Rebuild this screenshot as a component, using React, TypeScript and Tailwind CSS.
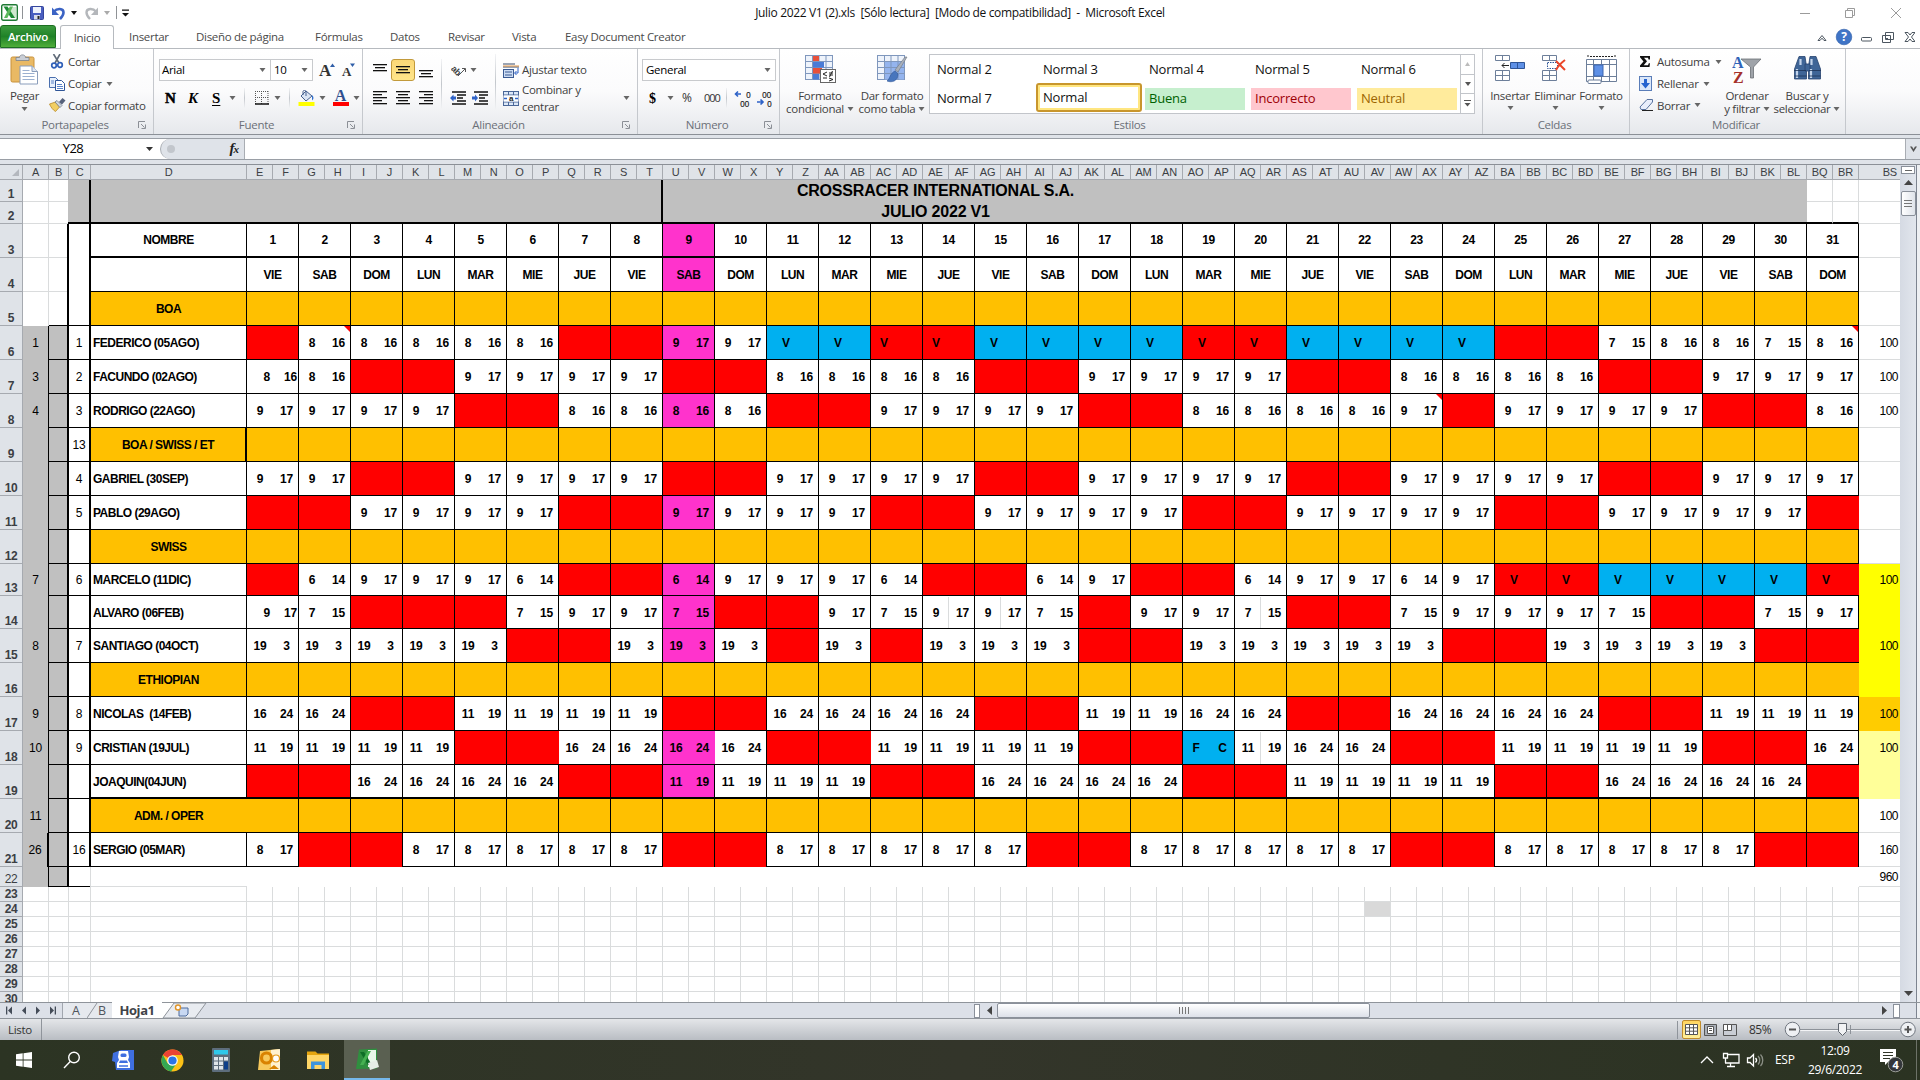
import React from "react";

/* ---------- small shared pieces ---------- */

const Caret = ({ className = "" }: { className?: string }) => (
  <svg width="7" height="4" viewBox="0 0 7 4" className={"shrink-0 " + className}>
    <path d="M0.5 0h6L3.5 4z" fill="#666" />
  </svg>
);

const Sep = ({ className = "" }: { className?: string }) => (
  <div className={"w-px shrink-0 bg-gradient-to-b from-[#f2f3f5] via-[#c3c7cc] to-[#f2f3f5] " + className} />
);

const GroupLabel = ({ label, launcher = true }: { label: string; launcher?: boolean }) => (
  <div className="flex h-[18px] shrink-0 items-center text-[#6b7078]">
    <div className="flex-1 pl-3 text-center">{label}</div>
    <div className="w-[15px]">
      {launcher && (
        <svg width="8" height="8" viewBox="0 0 8 8">
          <path d="M0.5 7V0.5H7" stroke="#8b8f96" fill="none" />
          <path d="M3 3l3.5 3.5M7.500 3.500v4h-4" stroke="#8b8f96" fill="none" />
        </svg>
      )}
    </div>
  </div>
);

const Group = ({ w, label, launcher = true, children }: { w: string; label: string; launcher?: boolean; children: React.ReactNode }) => (
  <div className={"flex h-full shrink-0 flex-col border-r border-[#c5c8cd] " + w}>
    <div className="flex h-[67px] shrink-0">{children}</div>
    <GroupLabel label={label} launcher={launcher} />
  </div>
);

const Lines = ({ rows, y = 0 }: { rows: [number, number][]; y?: number }) => (
  <svg width="14" height="14" viewBox="0 0 14 14">
    {rows.map(([x, w], i) => (
      <rect key={i} x={x} y={y + i * 3} width={w} height="1.300" fill="#111" />
    ))}
  </svg>
);

/* ---------- title and tabs ---------- */

const ExcelLogo = () => (
  <svg width="17" height="17" viewBox="0 0 17 17">
    <rect x="0.7" y="0.7" width="15.6" height="15.600" rx="1.500" fill="#fff" stroke="#1f7a34" strokeWidth="1.400" />
    <path d="M10 3h5v11h-5z" fill="#cfe8cf" />
    <path d="M2.500 2.500h4L14 14h-4z" fill="#1d8a35" />
    <path d="M12 2.500h-3.200L3 14h3.300z" fill="#5cb85c" />
  </svg>
);

const TitleBar = () => (
  <div className="flex h-[25px] shrink-0 items-center bg-white pl-[1px]">
    <div className="flex w-[300px] items-center">
      <ExcelLogo />
      <div className="ml-[4px] h-[13px] w-px bg-[#8f9296]" />
      <svg width="14" height="14" viewBox="0 0 14 14" className="ml-[7px]">
        <rect x="0.5" y="0.5" width="13" height="13" rx="1" fill="#4a5fc0" stroke="#34459c" />
        <rect x="3" y="1" width="8" height="6" fill="#eef2fc" />
        <rect x="4" y="9" width="6" height="4.500" fill="#d8dcea" />
        <rect x="7.500" y="10" width="2" height="3" fill="#222" />
      </svg>
      <svg width="14" height="14" viewBox="0 0 14 14" className="ml-[8px]">
        <path d="M2 5.500C5 2 11.500 2 11.500 6.500c0 3-2 5-3.500 6.500" stroke="#3b63c4" strokeWidth="2.600" fill="none" />
        <path d="M0 1.500v7.500h7z" fill="#3b63c4" />
      </svg>
      <svg width="6" height="4" viewBox="0 0 6 4" className="ml-[5px]"><path d="M0 0h6L3 4z" fill="#111" /></svg>
      <svg width="14" height="14" viewBox="0 0 14 14" className="ml-[7px]">
        <path d="M12 5.500C9 2 2.500 2 2.500 6.500c0 3 2 5 3.500 6.500" stroke="#b4b7bb" strokeWidth="2.400" fill="none" />
        <path d="M14 1.500v7.500H7z" fill="#b4b7bb" />
      </svg>
      <svg width="6" height="4" viewBox="0 0 6 4" className="ml-[6px]"><path d="M0 0h6L3 4z" fill="#aaa" /></svg>
      <div className="ml-[6px] h-[13px] w-px bg-[#8f9296]" />
      <svg width="7" height="8" viewBox="0 0 7 8" className="ml-[5px]">
        <path d="M0 0.500h7v1.300H0zM0 4h7L3.500 7.500z" fill="#111" />
      </svg>
    </div>
    <div className="flex-1 whitespace-pre pr-[0px] text-center text-[12px] tracking-[-0.34px] text-[#111]">
      Julio 2022 V1 (2).xls  [Sólo lectura]  [Modo de compatibilidad]  -  Microsoft Excel
    </div>
    <div className="flex w-[301px] items-center justify-end pr-[19px]">
      <svg width="104" height="12" viewBox="0 0 104 12" fill="none" stroke="#9b9b9b">
        <path d="M3 6.500h10M48.500 3.500h7v7h-7zM50.500 3.500v-2h7v7h-2M94 1l10 10M104 1L94 11" />
      </svg>
    </div>
  </div>
);

const TABS: [string, string][] = [
  ["Insertar", "w-[67px]"],
  ["Diseño de página", "w-[119px]"],
  ["Fórmulas", "w-[75px]"],
  ["Datos", "w-[58px]"],
  ["Revisar", "w-[64px]"],
  ["Vista", "w-[53px]"],
  ["Easy Document Creator", "w-[160px]"],
];

const RibbonTabs = () => (
  <div className="flex h-[24px] shrink-0 items-stretch border-b border-[#b6babf] bg-white text-[#4a4a4a]">
    <div className="flex w-[56px] items-center justify-center rounded-t-[3px] border border-[#1d6f22] bg-gradient-to-b from-[#3b9a3d] via-[#1f8227] to-[#4fae3a] font-semibold text-white">
      Archivo
    </div>
    <div className="-mb-px ml-[4px] mr-[15px] flex w-[54px] items-center justify-center rounded-t-[3px] border border-b-0 border-[#b6babf] bg-white">
      Inicio
    </div>
    {TABS.map(([t, w]) => (
      <div key={t} className={"flex shrink-0 items-center whitespace-nowrap " + w}>{t}</div>
    ))}
    <div className="flex flex-1 items-center justify-end pr-[5px]">
      <svg width="100" height="18" viewBox="0 0 100 18" fill="none" stroke="#4c5660">
        <path d="M3 12.500l4-5 4 5-2 0-2-2.300-2 2.300z" strokeWidth="1" />
        <circle cx="29" cy="9" r="7.800" fill="#3f74c6" stroke="#2f5ea8" strokeWidth="0.600" />
        <text x="29" y="13.300" fontSize="12" fontWeight="700" textAnchor="middle" fill="#fff" stroke="none" fontFamily="Open Sans, sans-serif">?</text>
        <rect x="46.500" y="9.500" width="10" height="3.500" rx="1" />
        <path d="M70.500 4.500h8v7h-8zM67.500 7.500h8v7h-8zM70 10.500h3" />
        <path d="M90 4.500h3l2 2.500 2-2.500h3l-3.500 4.500 3.500 4.500h-3l-2-2.500-2 2.500h-3l3.500-4.500z" />
      </svg>
    </div>
  </div>
);

/* ---------- ribbon ---------- */

const Clipboard = () => (
  <Group w="w-[154px]" label="Portapapeles">
    <div className="flex w-[49px] flex-col items-center pt-[5px]">
      <svg width="29" height="31" viewBox="0 0 29 31">
        <rect x="1" y="3" width="23" height="25" rx="1.500" fill="#e9b964" stroke="#c8913b" />
        <path d="M6 3.500h3.500C9.500 0 15.500 0 15.500 3.500H19v3H6z" fill="#c9ced6" stroke="#7b828c" strokeWidth="0.800" />
        <path d="M10 12h12l5.500 5.500V30H10z" fill="#fff" stroke="#8a9dbb" />
        <path d="M12.500 16.500h7M12.500 19.500h12M12.500 22.500h12M12.500 25.500h12" stroke="#9bb0d0" />
        <path d="M22 12v5.500h5.500" fill="#dfe7f3" stroke="#8a9dbb" />
      </svg>
      <div className="mt-[3px] h-[16px] leading-[16px]">Pegar</div>
      <Caret className="mt-[3px]" />
    </div>
    <div className="flex flex-col pt-[2px] [&>div]:h-[22px]">
      <div className="flex items-center">
        <svg width="16" height="15" viewBox="0 0 16 15" fill="none">
          <path d="M4.500 0L10 9M11 0L6 9" stroke="#5f6a78" strokeWidth="1.600" />
          <circle cx="5" cy="11.500" r="2.300" stroke="#2f5fb8" strokeWidth="1.700" />
          <circle cx="11" cy="11" r="2.300" stroke="#2f5fb8" strokeWidth="1.700" />
        </svg>
        <span className="ml-[3px]">Cortar</span>
      </div>
      <div className="flex items-center">
        <svg width="16" height="14" viewBox="0 0 16 14">
          <path d="M0.500 0.500h6l3 3v7h-9z" fill="#e8f0fb" stroke="#4a6fae" />
          <path d="M6.500 3.500h6l3 3v7h-9z" fill="#fff" stroke="#2f5597" />
          <path d="M8 7.500h5M8 9.500h6M8 11.500h6M2 4h3M2 6h3" stroke="#5b84c9" />
        </svg>
        <span className="ml-[3px]">Copiar</span>
        <Caret className="ml-[5px]" />
      </div>
      <div className="flex items-center">
        <svg width="17" height="14" viewBox="0 0 17 14">
          <path d="M0.500 6l6-2 4 5-4 4.500C4 12 2 9.500 0.500 6z" fill="#f2cf63" stroke="#b98a2a" strokeWidth="0.800" />
          <path d="M6 4l2-1.500 5 5-2 2z" fill="#cfd6e0" stroke="#66707e" strokeWidth="0.700" />
          <path d="M10 4l3.500-4 3 2.500-3.500 4z" fill="#56617a" />
        </svg>
        <span className="ml-[2px]">Copiar formato</span>
      </div>
    </div>
  </Group>
);

const FontGroup = () => (
  <Group w="w-[209px]" label="Fuente">
    <div className="flex flex-col">
      <div className="ml-[5px] mt-[10px] flex h-[22px] text-black">
        <div className="flex w-[112px] items-center justify-between border border-[#c8cacd] bg-white pl-[2px] pr-[4px]">Arial<Caret /></div>
        <div className="-ml-px flex w-[43px] items-center justify-between border border-[#c8cacd] bg-white pl-[3px] pr-[4px]">10<Caret /></div>
        <div className="flex pl-[6px] font-['Liberation_Serif'] font-bold tracking-normal text-[#333]">
          <span className="w-[11px] text-[17px] leading-[24px]">A</span>
          <svg width="5" height="4" viewBox="0 0 5 4" className="mt-[4px]"><path d="M0 4h5L2.500 0.500z" fill="#2f5ea8" /></svg>
          <span className="ml-[7px] w-[8px] text-[13px] leading-[26px]">A</span>
          <svg width="5" height="4" viewBox="0 0 5 4" className="mt-[4px]"><path d="M0 0.500h5L2.500 4z" fill="#2f5ea8" /></svg>
        </div>
      </div>
      <div className="mt-[4px] flex h-[26px] items-center font-['Liberation_Serif'] text-[15px] font-bold tracking-normal text-black">
        <span className="ml-[11px] w-[23px] [-webkit-text-stroke:0.5px_black]">N</span>
        <span className="w-[24px] italic">K</span>
        <span className="w-[17px] underline underline-offset-2">S</span>
        <Caret />
        <Sep className="ml-[8px] h-[20px]" />
        <svg width="14" height="14" viewBox="0 0 14 14" className="ml-[10px]">
          <path d="M0.500 0v13M6.500 0v13M13 0v13M0 0.500h13M0 6.500h13" stroke="#555" strokeDasharray="1 1" fill="none" />
          <path d="M0 13h14" stroke="#111" strokeWidth="1.500" />
        </svg>
        <Caret className="ml-[5px]" />
        <Sep className="ml-[8px] h-[20px]" />
        <svg width="17" height="16" viewBox="0 0 17 16" className="ml-[8px]">
          <path d="M3 6l5-5 6 5-6 5z" fill="#dbe5f4" stroke="#47618f" />
          <path d="M5 5V1.500c0-1.500 3-1.500 3 0V6" stroke="#47618f" fill="none" />
          <path d="M14 5c2 2 2 4 0 5.500z" fill="#2f6fd0" />
          <rect x="0.500" y="12" width="16" height="4" fill="#ff0" />
        </svg>
        <Caret className="ml-[4px]" />
        <div className="ml-[6px] flex h-[16px] w-[17px] flex-col items-center">
          <span className="h-[12px] text-[16px] leading-[12px] text-[#2f4f8f]">A</span>
          <div className="h-[4px] w-[16px] bg-[#f00]" />
        </div>
        <Caret className="ml-[4px]" />
      </div>
    </div>
  </Group>
);

const Align = () => (
  <Group w="w-[275px]" label="Alineación">
    <div className="flex w-[78px] flex-col">
      <div className="mt-[10px] flex h-[22px] items-center">
        <div className="ml-[10px] w-[18px] pb-[2px]"><Lines rows={[[0, 14], [2, 10], [0, 14]]} y={2} /></div>
        <div className="flex h-[22px] w-[24px] items-center justify-center rounded-[3px] border border-[#c29a3b] bg-gradient-to-b from-[#fbd877] to-[#ffe58a]"><Lines rows={[[0, 14], [2, 10], [0, 14]]} y={3} /></div>
        <div className="ml-[4px] pt-[3px]"><Lines rows={[[0, 14], [2, 10], [0, 14]]} y={5} /></div>
      </div>
      <div className="mt-[4px] flex h-[26px] items-center gap-[9px] pl-[10px]">
        <Lines rows={[[0, 14], [0, 9], [0, 14], [0, 9], [0, 14]]} />
        <Lines rows={[[0, 14], [2, 10], [0, 14], [2, 10], [0, 14]]} />
        <Lines rows={[[0, 14], [5, 9], [0, 14], [5, 9], [0, 14]]} />
      </div>
    </div>
    <Sep className="mt-[10px] h-[50px]" />
    <div className="flex w-[53px] flex-col">
      <div className="mt-[10px] flex h-[22px] items-center pl-[9px]">
        <svg width="17" height="14" viewBox="0 0 17 14">
          <text x="0" y="9" fontSize="9" fontWeight="700" fontFamily="Liberation Sans, sans-serif" fill="#444" transform="rotate(45 3 7)">ab</text>
          <path d="M7 13l7-7M11 5.500h3.500V9" stroke="#555" fill="none" />
        </svg>
        <Caret className="ml-[2px]" />
      </div>
      <div className="mt-[4px] flex h-[26px] items-center gap-[6px] pl-[8px]">
        {[0, 1].map((k) => (
          <svg key={k} width="16" height="14" viewBox="0 0 16 14">
            <path d="M2 1h14M7 4h9M7 7h6M7 10h9M2 13h14" stroke="#111" strokeWidth="1.400" />
            <path d={k ? "M0 5.500h3V3.500L6 7l-3 3.500V8.500H0z" : "M6 5.500H3.500V3.500L0 7l3.500 3.500V8.500H6z"} fill="#2f63c8" />
          </svg>
        ))}
      </div>
    </div>
    <Sep className="mt-[5px] h-[56px]" />
    <div className="flex flex-col">
      <div className="mt-[10px] flex h-[22px] items-center pl-[7px]">
        <svg width="16" height="15" viewBox="0 0 16 15">
          <path d="M0 1h12M0 4h16" stroke="#3a4a66" strokeWidth="1.200" />
          <path d="M0 3h16" stroke="#e79a4a" />
          <rect x="0.500" y="6.500" width="10" height="8" fill="#cddcf3" stroke="#3a5a92" />
          <path d="M2 9h7M2 12h7" stroke="#3a5a92" />
          <path d="M15 5v5h-3M13.500 8l-2 2 2 2" stroke="#2f63c8" fill="none" />
        </svg>
        <span className="ml-[3px]">Ajustar texto</span>
      </div>
      <div className="mt-[4px] flex h-[26px] items-center pl-[7px]">
        <svg width="16" height="15" viewBox="0 0 16 15">
          <rect x="0.500" y="0.500" width="15" height="14" fill="#dce8f8" stroke="#4a6798" />
          <path d="M5.500 0v4M10.500 0v4M5.500 11v4M10.500 11v4M0 4h16M0 11h16" stroke="#4a6798" />
          <rect x="0.500" y="4.500" width="15" height="6" fill="#fff" />
          <text x="8" y="10" fontSize="8" fontWeight="700" textAnchor="middle" fontFamily="Liberation Sans, sans-serif" fill="#222">a</text>
          <path d="M1 7.500h3M12 7.500h3" stroke="#2f63c8" strokeWidth="1.500" />
        </svg>
        <span className="ml-[3px] w-[97px]">Combinar y centrar</span>
        <Caret className="ml-[4px]" />
      </div>
    </div>
  </Group>
);

const NumberGroup = () => (
  <Group w="w-[142px]" label="Número">
    <div className="flex flex-col">
      <div className="ml-[4px] mt-[10px] flex h-[22px] w-[134px] items-center justify-between border border-[#c8cacd] bg-white pl-[3px] pr-[4px] text-black">General<Caret /></div>
      <div className="mt-[4px] flex h-[26px] items-center text-[12px] text-[#333]">
        <span className="ml-[11px] w-[18px] font-['Liberation_Serif'] text-[14px] font-bold text-black">$</span>
        <Caret />
        <span className="ml-[8px] w-[22px]">%</span>
        <span className="w-[22px] text-[11px] tracking-[-1px]">000</span>
        <Sep className="h-[20px]" />
        <svg width="38" height="17" viewBox="0 0 38 17" className="ml-[7px]" fill="none">
          <g fontFamily="Open Sans, sans-serif" fontSize="8.500" fontWeight="600" fill="#333">
            <text x="12" y="8">0</text><text x="6" y="16.500">00</text>
            <text x="28" y="8">00</text><text x="33" y="16.500">0</text>
          </g>
          <path d="M1 4h6M4 1.500L1.500 4 4 6.500M23 12h6M26.500 9.500L29 12l-2.500 2.500" stroke="#2f63c8" strokeWidth="1.600" />
        </svg>
      </div>
    </div>
  </Group>
);

const BigButton = ({ w, icon, a, b, caretOnly = false }: { w: string; icon: React.ReactNode; a: string; b?: string; caretOnly?: boolean }) => (
  <div className={"flex shrink-0 flex-col items-center pt-[6px] " + w}>
    <div className="flex h-[31px] items-start">{icon}</div>
    <div className="mt-[2px] h-[14px] whitespace-nowrap leading-[16px]">{a}</div>
    {caretOnly ? (
      <Caret className="mt-[4px]" />
    ) : (
      <div className="flex h-[13px] items-center whitespace-nowrap leading-[13px]">{b}<Caret className="ml-[3px]" /></div>
    )}
  </div>
);

const STYLES: { t: string; c: string }[] = [
  { t: "Normal 2", c: "" },
  { t: "Normal 3", c: "" },
  { t: "Normal 4", c: "" },
  { t: "Normal 5", c: "" },
  { t: "Normal 6", c: "" },
  { t: "Normal 7", c: "" },
  { t: "Normal", c: "sel" },
  { t: "Buena", c: "bg-[#c6efce] text-[#006100]" },
  { t: "Incorrecto", c: "bg-[#ffc7ce] text-[#9c0006]" },
  { t: "Neutral", c: "bg-[#ffeb9c] text-[#9c6500]" },
];

const Styles = () => (
  <Group w="w-[703px]" label="Estilos" launcher={false}>
    <BigButton
      w="w-[80px]"
      a="Formato"
      b="condicional"
      icon={
        <svg width="31" height="28" viewBox="0 0 31 28">
          <rect x="0.500" y="0.500" width="27" height="24" fill="#eef3fb" stroke="#7f97bd" />
          <path d="M7.500 1v24M14 1v24M21 1v24M1 6.500h26M1 12.500h26M1 18.500h26" stroke="#7f97bd" />
          <rect x="8" y="1" width="6" height="5" fill="#e8503a" /><rect x="8" y="7" width="11" height="5.500" fill="#4a7bd6" />
          <rect x="8" y="13" width="9" height="5.500" fill="#e8503a" /><rect x="8" y="19" width="6" height="5.500" fill="#4a7bd6" />
          <rect x="15.500" y="14.500" width="15" height="13" fill="#fff" stroke="#666" />
          <path d="M22 17l-4 2 4 2M18 23h4M24 18h4M24 20h4M27.500 16l-3 6M24 23l4 1.500-4 1.500" stroke="#222" fill="none" />
        </svg>
      }
    />
    <BigButton
      w="w-[64px]"
      a="Dar formato"
      b="como tabla"
      icon={
        <svg width="31" height="28" viewBox="0 0 31 28">
          <rect x="0.500" y="0.500" width="27" height="24" fill="#eef3fb" stroke="#7f97bd" />
          <rect x="7" y="6.500" width="20" height="18" fill="#94b4ee" />
          <path d="M7.500 1v24M14 1v24M21 1v24M1 6.500h26M1 12.500h26M1 18.500h26" stroke="#7f97bd" />
          <path d="M30 2l-9 15-3-2L28 2z" fill="#a9b0ba" stroke="#6e7681" strokeWidth="0.600" />
          <path d="M18 16c-5 2-5 8-8 10 5 2 11 0 11-7z" fill="#4876bd" stroke="#2f5597" strokeWidth="0.600" />
        </svg>
      }
    />
    <div className="ml-[5px] mt-[5px] flex h-[60px] w-[546px] border border-[#c2c5ca] bg-white">
      <div className="grid w-[531px] grid-cols-5 grid-rows-2 text-[13px] tracking-[-0.2px] text-[#111]">
        {STYLES.map((s) =>
          s.c === "sel" ? (
            <div key={s.t} className="mt-[-1px] flex h-[29px] items-center rounded-[3px] border-2 border-[#c8962d] shadow-[inset_0_0_0_2px_#ffe680]"><span className="pl-[5px]">{s.t}</span></div>
          ) : (
            <div key={s.t} className="flex items-center pl-[3px]">
              <div className={"flex h-[22px] w-[100px] items-center pl-[4px] " + s.c}>{s.t}</div>
            </div>
          )
        )}
      </div>
      <div className="flex w-[14px] flex-col border-l border-[#c2c5ca] [&>div]:flex [&>div]:flex-1 [&>div]:items-center [&>div]:justify-center">
        <div className="border-b border-[#c2c5ca]"><svg width="5" height="4" viewBox="0 0 5 4"><path d="M0 4h5L2.500 0z" fill="#bbb" /></svg></div>
        <div className="border-b border-[#c2c5ca]"><svg width="6" height="4" viewBox="0 0 6 4"><path d="M0 0h6L3 4z" fill="#555" /></svg></div>
        <div><svg width="7" height="7" viewBox="0 0 7 7"><path d="M0 0h7v1H0zM0.500 3h6l-3 3.500z" fill="#555" /></svg></div>
      </div>
    </div>
  </Group>
);

const Cells = () => (
  <Group w="w-[147px]" label="Celdas" launcher={false}>
    <div className="w-[5px]" />
    <BigButton
      w="w-[44px]"
      a="Insertar"
      caretOnly
      icon={
        <svg width="30" height="27" viewBox="0 0 30 27" fill="#fff" stroke="#6d7f9a">
          <path d="M0.500 0.500h14v5h-14zM7.500 0.500v5M0.500 15.500h14v10h-14zM7.500 15.500v10M0.500 20.500h14" />
          <path d="M15.500 7.500h14v6h-14z" fill="#5e90e6" stroke="#2f5597" /><path d="M22.500 7.500v6" stroke="#2f5597" />
          <path d="M14 10.500H7M9.500 8L7 10.500 9.500 13" stroke="#222" fill="none" />
        </svg>
      }
    />
    <BigButton
      w="w-[46px]"
      a="Eliminar"
      caretOnly
      icon={
        <svg width="26" height="27" viewBox="0 0 26 27" fill="#fff" stroke="#6d7f9a">
          <path d="M0.500 0.500h14v5h-14zM7.500 0.500v5M0.500 15.500h14v10h-14zM7.500 15.500v10M0.500 20.500h14" />
          <path d="M5.500 7.500h10v6h-10z" strokeDasharray="1.500 1" stroke="#2f5597" />
          <path d="M14 6l9 9M23 5c-4 3-7 6-9 10" stroke="#ea4528" strokeWidth="2" fill="none" />
        </svg>
      }
    />
    <BigButton
      w="w-[46px]"
      a="Formato"
      caretOnly
      icon={
        <svg width="31" height="29" viewBox="0 0 31 29" fill="#fff" stroke="#6d7f9a">
          <path d="M2 0v3M29 0v3M4 1.500h23" stroke="#222" strokeDasharray="2 1" />
          <path d="M0.500 4.500h30v22h-30zM7.500 4.500v22M23.500 4.500v22M0.500 9.500h30M0.500 21.500h30M15.500 4.500v22" />
          <rect x="8" y="10" width="9" height="11" fill="#5e90e6" stroke="#3c66b0" />
          <rect x="2" y="25" width="13" height="3.500" rx="1" />
        </svg>
      }
    />
  </Group>
);

const Edit = () => (
  <Group w="w-[216px]" label="Modificar" launcher={false}>
    <div className="flex w-[94px] flex-col pl-[9px] pt-[2px] [&>div]:h-[22px]">
      <div className="flex items-center">
        <svg width="14" height="13" viewBox="0 0 14 13"><path d="M1 1h10v3.500h-1.500L9 2.700H5l3 3.600-3.300 4H9l0.800-2H11L10.500 12H1v-1.500L4.500 6.500 1 2.200z" fill="#111" /></svg>
        <span className="ml-[4px]">Autosuma</span><Caret className="ml-[5px]" />
      </div>
      <div className="flex items-center">
        <svg width="13" height="15" viewBox="0 0 13 15"><rect x="0.500" y="0.500" width="12" height="14" fill="#dbe7f9" stroke="#5a7db8" /><path d="M5 3h3v4h3l-4.500 5.500L2 7h3z" fill="#2563cf" /></svg>
        <span className="ml-[5px]">Rellenar</span><Caret className="ml-[4px]" />
      </div>
      <div className="flex items-center">
        <svg width="15" height="12" viewBox="0 0 15 12"><path d="M1 8l7-7.500h5.500V3L7 10.500H2z" fill="#e8eefb" stroke="#59739f" /><path d="M3 11.500h11" stroke="#222" /></svg>
        <span className="ml-[3px]">Borrar</span><Caret className="ml-[4px]" />
      </div>
    </div>
    <BigButton
      w="w-[46px]"
      a="Ordenar"
      b="y filtrar"
      icon={
        <svg width="30" height="29" viewBox="0 0 30 29">
          <path d="M9 4h20l-7.500 8v11h-3V12z" fill="#9fa3a9" stroke="#6b6f75" strokeWidth="0.800" />
          <text x="0" y="13" fontSize="16" fontWeight="700" fontFamily="Liberation Serif, serif" fill="#2f63b8">A</text>
          <text x="1" y="28" fontSize="16" fontWeight="700" fontFamily="Liberation Serif, serif" fill="#a5302a">Z</text>
        </svg>
      }
    />
    <BigButton
      w="w-[74px]"
      a="Buscar y"
      b="seleccionar"
      icon={
        <svg width="29" height="26" viewBox="0 0 29 26" fill="#3f6597" stroke="#27436e" strokeWidth="0.800">
          <path d="M6 1.500h6l1.500 10V24H1.500V14z" /><path d="M23 1.500h-6l-1.500 10V24h12V14z" />
          <path d="M12 9h5v7h-5z" /><path d="M4 14v9M18 14v9M7.500 4v6M18.500 4v6" stroke="#c2d3ea" strokeWidth="2.200" />
          <path d="M1 15.500h12M16 15.500h12M1.500 21h12M15.500 21h12" stroke="#1d3357" />
        </svg>
      }
    />
  </Group>
);

const Ribbon = () => (
  <div className="flex h-[86px] shrink-0 border-b border-[#8b9097] bg-gradient-to-b from-white via-[#fbfbfc] to-[#e6e8ec] text-[#3f3f3f]">
    <Clipboard />
    <FontGroup />
    <Align />
    <NumberGroup />
    <Styles />
    <Cells />
    <Edit />
  </div>
);

/* ---------- formula bar ---------- */

const FormulaBar = () => (
  <div className="flex h-[29px] shrink-0 flex-col bg-[#dfe3e9] pt-[3px]">
    <div className="flex h-[22px] items-stretch border-y border-[#9a9fa6] bg-white">
      <div className="flex w-[160px] items-center text-[13px] text-black">
        <div className="w-[146px] text-center tracking-[-0.6px]">Y28</div>
        <svg width="7" height="4" viewBox="0 0 7 4"><path d="M0 0h7L3.500 4z" fill="#333" /></svg>
      </div>
      <div className="flex w-[85px] items-center justify-between rounded-l-full border-l border-r border-[#a9adb3] bg-[#dfe3e9] pl-[6px] pr-[6px]">
        <div className="h-[8px] w-[8px] rounded-full bg-[#c2c6cc]" />
        <span className="pb-[2px] font-['Liberation_Serif'] text-[15px] font-bold italic tracking-[-1px] text-[#222]">f<span className="text-[11px]">x</span></span>
      </div>
      <div className="flex-1" />
      <div className="flex w-[15px] items-center justify-center border-l border-[#a9adb3] bg-[#dfe3e9]">
        <svg width="7" height="6" viewBox="0 0 7 6"><path d="M0 0.500h2L3.500 3 5 0.500h2L3.500 6z" fill="#555" /></svg>
      </div>
    </div>
  </div>
);

/* ---------- sheet ---------- */

const colName = (n: number): string => (n < 26 ? String.fromCharCode(65 + n) : String.fromCharCode(64 + Math.floor(n / 26)) + String.fromCharCode(65 + (n % 26)));

const DAY_COLS: string[] = [...Array.from({ length: 60 }, (_, i) => colName(i + 4)), "BQ", "BR"];

const ColumnHeader = () => (
  <div className="flex h-[16px] shrink-0 border-b border-t border-b-[#a6aab0] border-t-[#8b9097] bg-[#dfe3e8] text-center font-['Liberation_Sans'] text-[11px] leading-[15px] tracking-[-0.2px] text-[#3c3f44] [&>div]:shrink-0 [&>div]:border-r [&>div]:border-[#a6aab0]">
    <div className="flex w-[23px] items-end justify-end pb-[3px] pr-[3px]">
      <svg width="7" height="7" viewBox="0 0 7 7"><path d="M7 0v7H0z" fill="#b4b8be" /></svg>
    </div>
    <div className="w-[26px]">A</div>
    <div className="w-[20px]">B</div>
    <div className="w-[22px]">C</div>
    <div className="w-[156px]">D</div>
    {DAY_COLS.map((c) => (
      <div key={c} className="w-[26px]">{c}</div>
    ))}
    <div className="w-[41px] border-r-0! pr-[3px] text-right">BS</div>
  </div>
);

const RowNo = ({ n, className = "" }: { n: number; className?: string }) => (
  <div className={"flex w-[23px] shrink-0 items-end justify-center overflow-hidden border-b border-r border-[#a6aab0] bg-[#dfe3e8] text-[12px] leading-[14px] tracking-[-0.4px] text-[#3c3f44] " + className}>{n}</div>
);

const DAY_NAMES = ["VIE", "SAB", "DOM", "LUN", "MAR", "MIE", "JUE"];
const DAYS = Array.from({ length: 31 }, (_, i) => i);

/* Run-length shift codes: R = day off, V/W = vacation (blue/red), X = red vacation aligned left. */
const expand = (s: string): string[] =>
  s.split(" ").flatMap((p) => {
    const [v, n] = p.split("*");
    return Array<string>(n ? Number(n) : 1).fill(v);
  });

type Row = { n: number; h: string; a?: string; c?: string; name: string; shifts?: string; total?: string; tint?: string };

const ROWS: Row[] = [
  { n: 5, h: "h-[34px]", name: "BOA" },
  { n: 6, h: "h-[34px]", a: "1", c: "1", name: "FEDERICO (05AGO)", shifts: "R 8-16c 8-16*4 R*2 9-17*2 V*2 X*2 V*4 W*2 V*4 R*2 7-15 8-16*2 7-15 8-16c", total: "100" },
  { n: 7, h: "h-[34px]", a: "3", c: "2", name: "FACUNDO (02AGO)", shifts: "8-16r 8-16 R*2 9-17*4 R*2 8-16*4 R*2 9-17*4 R*2 8-16*4 R*2 9-17*3", total: "100" },
  { n: 8, h: "h-[34px]", a: "4", c: "3", name: "RODRIGO (22AGO)", shifts: "9-17*4 R*2 8-16*4 R*2 9-17*4 R*2 8-16*4 9-17c R 9-17*4 R*2 8-16", total: "100" },
  { n: 9, h: "h-[34px]", c: "13", name: "BOA / SWISS / ET" },
  { n: 10, h: "h-[34px]", c: "4", name: "GABRIEL (30SEP)", shifts: "9-17*2 R*2 9-17*4 R*2 9-17*4 R*2 9-17*4 R*2 9-17*4 R*2 9-17*3" },
  { n: 11, h: "h-[34px]", c: "5", name: "PABLO (29AGO)", shifts: "R*2 9-17*4 R*2 9-17*4 R*2 9-17*4 R*2 9-17*4 R*2 9-17*4 R" },
  { n: 12, h: "h-[34px]", name: "SWISS" },
  { n: 13, h: "h-[32px]", a: "7", c: "6", name: "MARCELO (11DIC)", shifts: "R 6-14 9-17*3 6-14 R*2 6-14 9-17*3 6-14 R*2 6-14 9-17 R*2 6-14 9-17*2 6-14 9-17 W*2 V*4 W", total: "100", tint: "bg-[#ffff00]" },
  { n: 14, h: "h-[33px]", name: "ALVARO (06FEB)", shifts: "9-17r 7-15 R*3 7-15 9-17*2 7-15 R*2 9-17 7-15 9-17s*2 7-15 R 9-17*2 7-15s R*2 7-15 9-17*3 7-15 R*2 7-15 9-17", total: "", tint: "bg-[#ffff00]" },
  { n: 15, h: "h-[34px]", a: "8", c: "7", name: "SANTIAGO (04OCT)", shifts: "19-3*5 R*2 19-3*3 R 19-3 R 19-3*3 R*2 19-3*5 R*2 19-3*4 R*2", total: "100", tint: "bg-[#ffff00]" },
  { n: 16, h: "h-[34px]", name: "ETHIOPIAN", total: "", tint: "bg-[#ffff00]" },
  { n: 17, h: "h-[34px]", a: "9", c: "8", name: "NICOLAS  (14FEB)", shifts: "16-24*2 R*2 11-19*4 R*2 16-24*4 R*2 11-19*2 16-24*2 R*2 16-24*4 R*2 11-19*3", total: "100", tint: "bg-[#ffcc00]" },
  { n: 18, h: "h-[34px]", a: "10", c: "9", name: "CRISTIAN (19JUL)", shifts: "11-19*4 R*2 16-24*4 R*2 11-19*4 R*2 F-C 11-19s 16-24*2 R*2 11-19*4 R*2 16-24", total: "100", tint: "bg-[#ffff99]" },
  { n: 19, h: "h-[34px]", name: "JOAQUIN(04JUN)", shifts: "R*2 16-24*4 R*2 11-19*4 R*2 16-24*4 R*2 11-19*4 R*2 16-24*4 R", total: "", tint: "bg-[#ffff99]" },
  { n: 20, h: "h-[34px]", a: "11", name: "ADM. / OPER", total: "100" },
  { n: 21, h: "h-[34px]", a: "26", c: "16", name: "SERGIO (05MAR)", shifts: "8-17 R*2 8-17*5 R*2 8-17*5 R*2 8-17*5 R*2 8-17*5 R*2", total: "160" },
];

const DayCell = ({ code, day, row }: { code: string; day: number; row: number }) => {
  const m = code.match(/^([0-9F]+)-([0-9C]+)([crs]?)$/);
  const red = code === "R" || code === "W" || code === "X";
  const bg = red ? "bg-[#ff0000]" : code === "V" || code === "F-C" ? "bg-[#00b0f0]" : code === "O" ? "bg-[#ffc000]" : day === 8 ? "bg-[#ff33cc]" : "bg-white";
  const openRight =
    (row === 18 && [5, 8, 11, 23].includes(day)) ||
    (day === 30 && [11, 13, 15, 16, 19].includes(row)) ||
    (row === 20 && day < 0);
  const bottom = row === 19 ? "border-b-2 border-b-black" : row === 21 && red ? "" : "border-b border-b-black";
  return (
    <div className={"relative flex w-[52px] shrink-0 items-center pt-[1px] text-center " + bg + " " + bottom + (openRight ? "" : " border-r border-r-black")}>
      {m && (
        <>
          <span className={m[3] === "r" ? "w-[23px] shrink-0 text-right" : "w-[26px] shrink-0"}>{m[1]}</span>
          {m[3] === "s" && <span className="h-full w-px shrink-0 -ml-px bg-[#dadcdd]" />}
          <span className={m[3] === "r" ? "w-[27px] shrink-0 text-right" : "w-[27px] shrink-0"}>{m[2]}</span>
          {m[3] === "c" && (
            <svg width="6" height="6" viewBox="0 0 6 6" className="absolute right-0 top-0"><path d="M0 0h6v6z" fill="#ff0000" /></svg>
          )}
        </>
      )}
      {(code === "V" || code === "W") && <span className="w-[38px]">V</span>}
      {code === "X" && <span className="w-[26px]">V</span>}
    </div>
  );
};

const ShiftRow = ({ r }: { r: Row }) => {
  const codes = r.shifts ? expand(r.shifts) : DAYS.map(() => "O");
  const section = !r.shifts;
  const merged = r.n === 20;
  return (
    <div className={"flex shrink-0 " + r.h}>
      <RowNo n={r.n} />
      {r.n === 5 ? (
        <>
          <div className="w-[26px] shrink-0 border-r border-[#dadcdd]" />
          <div className="w-[18px] shrink-0 border-b border-black" />
        </>
      ) : (
        <>
          <div className={"flex w-[26px] shrink-0 items-center justify-center border-black bg-[#c0c0c0] font-normal " + (r.n === 21 ? "border-r-2" : "border-r")}>{r.a}</div>
          <div className="w-[18px] shrink-0 border-b border-black bg-[#c0c0c0]" />
        </>
      )}
      <div className="flex w-[24px] shrink-0 items-center justify-center border-b border-l-2 border-r-2 border-black bg-white font-normal">{r.c}</div>
      <div
        className={
          "flex shrink-0 items-center whitespace-pre border-black pt-[1px] tracking-[-0.5px] " +
          (merged ? "w-[208px] pr-[52px] " : "w-[156px] ") +
          (r.n === 9 ? "border-r-2 " : "border-r ") +
          (r.n === 19 ? "border-b-2 " : "border-b ") +
          (section ? "justify-center bg-[#ffc000]" : "bg-white pl-[2px]")
        }
      >
        {r.name}
      </div>
      {codes.map((c, i) => (merged && i === 0 ? null : <DayCell key={i} code={c} day={i} row={r.n} />))}
      <div className={"flex w-[41px] shrink-0 items-center justify-end pr-[2px] font-normal tracking-[-0.5px] " + (r.tint ?? "border-b border-[#dadcdd] bg-white")}>{r.total}</div>
    </div>
  );
};

const TitleRow = ({ n, text }: { n: number; text: string }) => {
  const thick = n === 2;
  return (
    <div className="flex h-[22px] shrink-0">
      <RowNo n={n} />
      <div className="w-[26px] shrink-0 border-b border-r border-[#dadcdd]" />
      <div className={"shrink-0 border-b border-[#dadcdd] " + (thick ? "w-[19px]" : "w-[19px]")} />
      <div className={"w-[23px] shrink-0 border-r-2 border-r-black bg-[#c0c0c0] " + (thick ? "border-b-2 border-b-black" : "")} />
      <div className={"w-[572px] shrink-0 border-r-2 border-r-black bg-[#c0c0c0] " + (thick ? "border-b-2 border-b-black" : "")} />
      <div className={"flex w-[1144px] shrink-0 items-center bg-[#c0c0c0] text-[16px] leading-[20px] " + (thick ? "border-b-2 border-b-black" : "")}>
        <div className="w-[545px] text-center">{text}</div>
      </div>
      <div className={"w-[26px] shrink-0 border-r border-r-[#dadcdd] " + (thick ? "border-b-2 border-b-black" : "border-b border-b-[#dadcdd]")} />
      <div className={"w-[26px] shrink-0 border-r border-r-[#dadcdd] " + (thick ? "border-b-2 border-b-black" : "border-b border-b-[#dadcdd]")} />
      <div className="w-[41px] shrink-0 border-b border-[#dadcdd]" />
    </div>
  );
};

const HeadRow = ({ n, label, cells }: { n: number; label: string; cells: string[] }) => {
  const b = n === 3 ? " border-b-2 border-b-black" : " border-b border-b-black";
  return (
    <div className="flex h-[34px] shrink-0">
      <RowNo n={n} />
      <div className="w-[26px] shrink-0 border-b border-r border-[#dadcdd]" />
      <div className="w-[18px] shrink-0 border-b border-[#dadcdd]" />
      <div className="w-[24px] shrink-0 border-l-2 border-r-2 border-black" />
      <div className={"flex w-[156px] shrink-0 items-center justify-center border-r border-r-black tracking-[-0.5px]" + b}>{label}</div>
      {cells.map((c, i) => (
        <div key={i} className={"flex w-[52px] shrink-0 items-center justify-center border-r border-r-black tracking-[-0.5px] " + (i === 8 ? "bg-[#ff33cc]" : "bg-white") + b}>{c}</div>
      ))}
      <div className="w-[41px] shrink-0 border-b border-[#dadcdd]" />
    </div>
  );
};

const EmptyRow = ({ n }: { n: number }) => (
  <div className="flex h-[15px] shrink-0 [&>div]:border-b [&>div]:border-r">
    <RowNo n={n} />
    <div className="w-[26px] shrink-0 border-[#dadcdd]" />
    <div className="w-[20px] shrink-0 border-[#dadcdd]" />
    <div className="w-[22px] shrink-0 border-[#dadcdd]" />
    <div className="w-[156px] shrink-0 border-[#dadcdd]" />
    {DAY_COLS.map((c) => (
      <div key={c} className={"w-[26px] shrink-0 border-[#dadcdd] " + (n === 24 && c === "AV" ? "bg-[#d9d9d9]" : "")} />
    ))}
    <div className="w-[41px] shrink-0 border-r-0! border-[#dadcdd]" />
  </div>
);

const Sheet = () => (
  <div className="flex h-[823px] w-[1900px] flex-col overflow-hidden bg-white font-['Liberation_Sans'] text-[12px] font-bold tracking-[-0.2px] text-black">
    <TitleRow n={1} text="CROSSRACER INTERNATIONAL S.A." />
    <TitleRow n={2} text="JULIO 2022 V1" />
    <HeadRow n={3} label="NOMBRE" cells={DAYS.map((d) => String(d + 1))} />
    <HeadRow n={4} label="" cells={DAYS.map((d) => DAY_NAMES[d % 7])} />
    {ROWS.map((r) => (
      <ShiftRow key={r.n} r={r} />
    ))}
    <div className="flex h-[20px] shrink-0 font-normal">
      <RowNo n={22} />
      <div className="w-[26px] shrink-0 border-r border-black bg-[#c0c0c0]" />
      <div className="w-[18px] shrink-0 border-b border-black bg-[#c0c0c0]" />
      <div className="w-[23px] shrink-0 border-b border-l-2 border-black" />
      <div className="w-[157px] shrink-0 border-b border-l border-[#dadcdd]" />
      <div className="w-[1612px] shrink-0" />
      <div className="flex w-[41px] shrink-0 items-center justify-end border-b border-[#dadcdd] pr-[2px] tracking-[-0.5px]">960</div>
    </div>
    {[23, 24, 25, 26, 27, 28, 29, 30].map((n) => (
      <EmptyRow key={n} n={n} />
    ))}
  </div>
);

const VScroll = () => (
  <div className="flex w-[20px] shrink-0 border-t border-[#8b9097]">
    <div className="flex w-[17px] flex-col items-center border-r border-[#7d8490] bg-gradient-to-r from-[#d5dae3] to-[#e2e6ed]">
      <div className="mt-[1px] flex h-[8px] w-[14px] items-center justify-center border border-[#8a909a] bg-white"><div className="h-px w-[7px] bg-[#666]" /></div>
      <svg width="9" height="5" viewBox="0 0 9 5" className="mt-[6px]"><path d="M0 5h9L4.500 0z" fill="#444" /></svg>
      <div className="mt-[6px] flex h-[25px] w-[15px] flex-col items-center justify-center gap-[2px] rounded-[2px] border border-[#8a909a] bg-gradient-to-r from-white to-[#dfe3ea]">
        <div className="h-px w-[8px] bg-[#777]" /><div className="h-px w-[8px] bg-[#777]" /><div className="h-px w-[8px] bg-[#777]" />
      </div>
      <div className="flex-1" />
      <svg width="9" height="5" viewBox="0 0 9 5" className="mb-[6px]"><path d="M0 0h9L4.500 5z" fill="#444" /></svg>
    </div>
    <div className="w-[3px] bg-[#eef0f3]" />
  </div>
);

/* ---------- bottom bars ---------- */

const SheetTabs = () => (
  <div className="flex h-[17px] shrink-0 border-b border-t border-[#8f949b] bg-[#dce0e8]">
    <svg width="62" height="15" viewBox="0 0 62 15" fill="#444c58">
      <path d="M6 3.500h1.300v8H6zM12 3.500v8L8 7.500zM26 3.500v8L22 7.500zM36 3.500v8l4-4zM50 3.500v8l4-4zM54.700 3.500H56v8h-1.300z" />
    </svg>
    <div className="flex w-[50px] border-l border-[#a1a6ae] bg-[#e6e9ee] text-[#50555d]">
      <span className="w-[24px] pl-[9px] text-[12.500px] leading-[15px]">A</span>
      <svg width="12" height="15" viewBox="0 0 12 15"><path d="M0 15L10 0" stroke="#8f949b" /></svg>
      <span className="-ml-[1px] text-[12.500px] leading-[15px]">B</span>
    </div>
    <div className="-mt-px flex h-[16px] w-[50px] items-center justify-center bg-white text-[13px] font-bold leading-[15px] tracking-[-0.4px] text-[#3f4348]">Hoja1</div>
    <svg width="48" height="15" viewBox="0 0 48 15" className="-ml-px">
      <path d="M0 0h13L2 15H0z" fill="#fff" />
      <path d="M13 0h32L34 15H2z" fill="#e9ecf1" stroke="#8f949b" />
      <path d="M18 5h9v6l-2 2h-7z" fill="#c8d8f2" stroke="#4d6a9c" />
      <circle cx="17" cy="4.500" r="2.500" fill="#fff" stroke="#e0952a" strokeWidth="1.400" />
    </svg>
    <div className="flex-1" />
    <div className="flex w-[946px] items-center">
      <div className="mr-[7px] h-[14px] w-[6px] border border-[#8a909a] bg-white" />
      <svg width="5" height="9" viewBox="0 0 5 9"><path d="M5 0v9L0 4.500z" fill="#444" /></svg>
      <div className="ml-[5px] flex h-[15px] w-[373px] items-center justify-center gap-[2px] rounded-[2px] border border-[#8a909a] bg-gradient-to-b from-white to-[#dde1e9]">
        <div className="h-[7px] w-px bg-[#777]" /><div className="h-[7px] w-px bg-[#777]" /><div className="h-[7px] w-px bg-[#777]" /><div className="h-[7px] w-px bg-[#777]" />
      </div>
      <div className="flex-1" />
      <svg width="5" height="9" viewBox="0 0 5 9"><path d="M0 0v9l5-4.500z" fill="#444" /></svg>
      <div className="ml-[6px] h-[14px] w-[7px] border border-[#8a909a] bg-white" />
      <div className="ml-px h-full w-[16px] border-r border-[#7d8490]" />
      <div className="h-full w-[3px] bg-[#eef0f3]" />
    </div>
  </div>
);

const StatusBar = () => (
  <div className="flex h-[21px] shrink-0 items-center bg-gradient-to-b from-[#e4e6e9] to-[#b9bdc3] text-[#333]">
    <div className="flex h-full w-[42px] items-center border-r border-[#8f949b] pl-[8px]">Listo</div>
    <div className="flex-1" />
    <div className="mr-[4px] h-[18px] w-px bg-[#8f949b]" />
    <div className="flex h-[19px] w-[19px] items-center justify-center rounded-[2px] border border-[#c08c2c] bg-gradient-to-b from-[#ffd45e] to-[#fff09a]">
      <svg width="13" height="11" viewBox="0 0 13 11" fill="#fff" stroke="#555"><path d="M0.500 0.500h12v10h-12zM4.500 0.500v10M8.500 0.500v10M0.500 3.800h12M0.500 7.200h12" /></svg>
    </div>
    <svg width="33" height="12" viewBox="0 0 33 12" className="ml-[3px]" fill="#fff" stroke="#555">
      <path d="M0.500 0.500h12v11h-12z" fill="#aab0b9" /><path d="M3.500 2.500h6v7h-6z" /><path d="M5 4.500h3M5 6.500h3" />
      <path d="M19.500 0.500h13v11h-13z" fill="#c9cdd4" /><path d="M19.500 0.500h4v6h-4zM23.500 0.500h4v6h-4z" />
    </svg>
    <span className="ml-[12px] w-[35px] text-[12px] tracking-[-0.5px]">85%</span>
    <svg width="132" height="19" viewBox="0 0 132 19" className="mr-[4px]">
      <path d="M15 9.500h101" stroke="#8d9299" /><path d="M15 10.500h101" stroke="#f3f4f6" />
      <path d="M66.500 5v9" stroke="#8d9299" />
      <circle cx="8.500" cy="9.500" r="7.300" fill="#eef0f3" stroke="#70767f" /><path d="M5 9.500h7" stroke="#555" strokeWidth="2" />
      <circle cx="124" cy="9.500" r="7.300" fill="#eef0f3" stroke="#70767f" /><path d="M120.500 9.500h7M124 6v7" stroke="#555" strokeWidth="2" />
      <path d="M54.500 3.500h8v8l-4 4-4-4z" fill="#f1f2f4" stroke="#5e646d" />
    </svg>
  </div>
);

const Taskbar = () => (
  <div className="flex h-[40px] shrink-0 items-center bg-gradient-to-r from-[#2c3423] via-[#33352a] to-[#2b3322] text-white">
    <div className="flex w-[48px] justify-center">
      <svg width="16" height="16" viewBox="0 0 16 16" fill="#fff"><path d="M0 2.300l6.700-1v6.300H0zM7.500 1.200L16 0v7.600H7.500zM0 8.400h6.700v6.300L0 13.700zM7.500 8.400H16V16l-8.500-1.200z" /></svg>
    </div>
    <div className="flex w-[48px] justify-center">
      <svg width="18" height="18" viewBox="0 0 18 18" fill="none" stroke="#fff" strokeWidth="1.400"><circle cx="11" cy="6.500" r="5.300" /><path d="M7.200 10.500L1 17" /></svg>
    </div>
    <div className="flex w-[54px] justify-center">
      <svg width="23" height="22" viewBox="0 0 23 22">
        <path d="M1 4l8-3h13v20H4l-1-8-3-1z" fill="#3f6fe0" />
        <path d="M7 2h9l1 6-1 3 2 3v5H5v-5l2-3-1-3z" fill="#fff" />
        <rect x="8.500" y="4.500" width="6" height="3.500" rx="1.500" fill="#3f6fe0" /><path d="M8 11.500h7l1 2.500H7z" fill="#3f6fe0" /><path d="M7 17h9" stroke="#3f6fe0" strokeWidth="1.500" />
      </svg>
    </div>
    <div className="flex w-[44px] justify-center">
      <svg width="23" height="23" viewBox="0 0 24 24">
        <circle cx="12" cy="12" r="11.500" fill="#fbc116" />
        <path d="M12 12L2 6.200A11.500 11.500 0 0 1 22 6.300H12z" fill="#ea4335" />
        <path d="M2 6.200A11.500 11.500 0 0 0 10.500 23.400L16.500 14.500 7 15z" fill="#34a853" />
        <path d="M2 6.200L7.500 15l4.500-4-2-4.700L12 6.300z" fill="#ea4335" fillOpacity="0" />
        <circle cx="12" cy="12" r="5.500" fill="#fff" /><circle cx="12" cy="12" r="4.300" fill="#2b74e8" />
      </svg>
    </div>
    <div className="flex w-[54px] justify-center">
      <svg width="18" height="24" viewBox="0 0 18 24">
        <rect width="18" height="24" rx="1" fill="#5d6d7c" /><rect x="2" y="2" width="14" height="4.500" fill="#2fc8ea" />
        <g fill="#dfe5ea"><path d="M2 9h4v3.500H2zM7 9h4v3.500H7zM2 13.500h4V17H2zM7 13.500h4V17H7zM2 18h4v3.500H2zM7 18h4v3.500H7zM12 9h4v3.500h-4z" /></g><rect x="12" y="13.500" width="4" height="8" fill="#0e3f8a" />
      </svg>
    </div>
    <div className="flex w-[42px] justify-center">
      <svg width="23" height="22" viewBox="0 0 23 22">
        <path d="M2 2l19-2v21H0z" fill="#f7c95c" /><path d="M13 1l9-1v21h-9z" fill="#fff1cf" />
        <circle cx="8.500" cy="9" r="5" fill="none" stroke="#d98200" strokeWidth="3.200" />
        <circle cx="18" cy="9.500" r="3.500" fill="#fff" stroke="#e59a1c" strokeWidth="1.200" /><path d="M11 20l5-4 5 4z" fill="#d98200" />
      </svg>
    </div>
    <div className="flex w-[56px] justify-center">
      <svg width="22" height="19" viewBox="0 0 22 19">
        <path d="M0 0.500h8.500l2 2H22V18H0z" fill="#e5a50f" /><path d="M0 4h22v14H0z" fill="#ffd667" />
        <path d="M4 18v-7.500h14V18h-3.500v-4h-7v4z" fill="#3d94dc" />
      </svg>
    </div>
    <div className="flex h-full w-[46px] items-center justify-center border-b-2 border-[#76b9ed] bg-[#5a6051] -ml-[2px]">
      <svg width="23" height="22" viewBox="0 0 23 22">
        <path d="M3 1.500L21 0.500v20L0 21z" fill="#2f8f3f" /><path d="M12 2h8v17h-8z" fill="#eaf6ea" />
        <path d="M4 4h4l8 13h-4z" fill="#0d6e26" /><path d="M15 3h-3.500L4 17h3.500z" fill="#46b152" /><path d="M12 15l9-3 2 7-9 3z" fill="#e6ede6" />
      </svg>
    </div>
    <div className="flex-1" />
    <svg width="66" height="18" viewBox="0 0 66 18" fill="none" stroke="#fff" strokeWidth="1.300">
      <path d="M1 12l6-6 6 6" />
      <path d="M28 3.500h11v8.500H25M30.500 12v3.500M27 15.500h8M23.500 2.500h4v4.500h-4zM25.500 7v5" />
      <path d="M47.500 7h2.500l3.500-3.500v11.500L50 11.500h-2.500z" /><path d="M55.500 7c1.300 1.300 1.300 3.200 0 4.500" /><path d="M58 5c2.300 2.300 2.300 6 0 8.500M60.500 3.500c3 3 3 8.500 0 11.500" stroke="#8b8f86" />
    </svg>
    <span className="ml-[9px] w-[32px] text-[12px]">ESP</span>
    <div className="flex w-[56px] flex-col items-center text-[12px] leading-[19px]"><span>12:09</span><span>29/6/2022</span></div>
    <svg width="24" height="26" viewBox="0 0 24 26" className="ml-[17px]">
      <path d="M0 2h16v13H8l-3 3v-3H0z" fill="#fff" /><path d="M3 5.500h10M3 8.500h10M3 11.500h7" stroke="#2f3528" strokeWidth="1.200" />
      <circle cx="15.500" cy="17.500" r="7.300" fill="#33363a" stroke="#9b9e98" />
      <text x="15.500" y="21.500" fontSize="11" fontWeight="700" fill="#fff" textAnchor="middle" fontFamily="Open Sans, sans-serif">4</text>
    </svg>
    <div className="ml-[12px] h-full w-px bg-[#6d7268]" />
    <div className="w-[3px]" />
  </div>
);

export default function App() {
  return (
    <div className="flex h-[1080px] w-[1920px] flex-col overflow-hidden bg-white font-['Open_Sans'] text-[11.500px] tracking-[-0.3px]">
      <TitleBar />
      <RibbonTabs />
      <Ribbon />
      <FormulaBar />
      <div className="flex h-[838px] shrink-0">
        <div className="flex w-[1900px] shrink-0 flex-col">
          <ColumnHeader />
          <Sheet />
        </div>
        <VScroll />
      </div>
      <SheetTabs />
      <StatusBar />
      <Taskbar />
    </div>
  );
}
